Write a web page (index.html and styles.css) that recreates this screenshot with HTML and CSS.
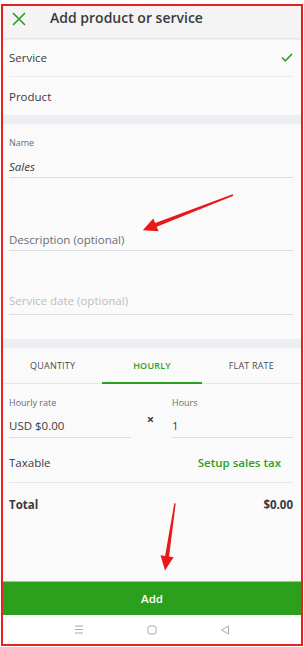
FILE: index.html
```html
<html>
  <head>
    <title>Add product or service</title>
    <meta name="viewport" content="width=device-width, initial-scale=1.0" />
    <link rel="stylesheet" href="styles.css">
  </head>
  <body>
    <div class="frame">
      <div class="topbar">
        <svg class="close" width="14" height="14" viewBox="0 0 14 14">
          <path d="M1 1 L13 13 M13 1 L1 13" stroke="#2ca01c" stroke-width="1.6" fill="none" />
        </svg>
        <h1>Add product or service</h1>
      </div>
      <div class="typerow">
        <span>Service</span>
        <svg width="12" height="9" viewBox="0 0 12 9">
          <path d="M1 4.5 L4.3 7.8 L11 1" stroke="#2ca01c" stroke-width="1.6" fill="none" />
        </svg>
      </div>
      <div class="typerow last">
        <span>Product</span>
      </div>
      <div class="band"></div>
      <div class="fields">
        <div class="field name">
          <div class="label">Name</div>
          <div class="value italic">Sales</div>
        </div>
        <div class="field desc">
          <div class="value hint">Description (optional)</div>
        </div>
        <div class="field date">
          <div class="value faint">Service date (optional)</div>
        </div>
      </div>
      <div class="band"></div>
      <div class="tabs">
        <div class="tab">QUANTITY</div>
        <div class="tab active">HOURLY</div>
        <div class="tab">FLAT RATE</div>
      </div>
      <div class="rate">
        <div class="field">
          <div class="label">Hourly rate</div>
          <div class="value">USD $0.00</div>
        </div>
        <div class="times">&times;</div>
        <div class="field">
          <div class="label">Hours</div>
          <div class="value">1</div>
        </div>
      </div>
      <div class="row taxable">
        <span>Taxable</span>
        <span class="link">Setup sales tax</span>
      </div>
      <div class="row total">
        <span>Total</span>
        <span>$0.00</span>
      </div>
      <div class="grow"></div>
      <button class="add">Add</button>
      <div class="navbar">
        <svg width="10" height="9" viewBox="0 0 10 9">
          <path d="M1 1 H9 M1 4.5 H9 M1 8 H9" stroke="#a9a9a9" stroke-width="1" fill="none" />
        </svg>
        <svg width="10" height="10" viewBox="0 0 10 10">
          <rect x="1" y="1" width="8" height="8" rx="2" stroke="#a9a9a9" stroke-width="1" fill="none" />
        </svg>
        <svg width="10" height="10" viewBox="0 0 10 10">
          <path d="M8.5 1 L1.5 5 L8.5 9 Z" stroke="#a9a9a9" stroke-width="1" fill="none" stroke-linejoin="round" />
        </svg>
      </div>
    </div>
    <svg class="marks" width="304" height="647" viewBox="0 0 304 647">
      <polygon fill="#e8191b" points="232.6,194.3 155.3,223.0 153.2,218.6 142.8,230.2 158.6,231.2 156.7,226.8 233.4,195.7" />
      <polygon fill="#e8191b" points="174.3,503.2 165.1,555.9 160.5,555.2 165,570.5 173.6,557.2 169.1,556.5 175.7,503.4" />
    </svg>
  </body>
</html>
```

FILE: styles.css
```css
body {
  margin: 0;
  background: #fff;
  font-family: "Open Sans", "Noto Sans", sans-serif;
  color: #393a3d;
  position: relative;
}
.frame {
  margin: 4px 1px 1px 1px;
  border: 2px solid #e8201f;
  background: #fafafa;
  display: flex;
  flex-direction: column;
  box-sizing: border-box;
  height: 642px;
}
.topbar {
  height: 32px;
  box-sizing: border-box;
  padding-top: 2px;
  background: #f4f4f4;
  display: flex;
  align-items: flex-start;
  box-shadow: 0 1px 2px rgba(0, 0, 0, 0.12);
  position: relative;
}
.close {
  margin: 4px 24px 0 9px;
}
h1 {
  margin: 0;
  font-size: 14px;
  line-height: 20px;
  font-weight: 600;
  color: #393a3d;
}
.typerow {
  height: 38px;
  margin: 0 8px 0 6px;
  display: flex;
  align-items: center;
  justify-content: space-between;
  font-size: 11.5px;
  border-bottom: 1px solid #ececec;
}
.typerow.last {
  border-bottom: none;
}
.band {
  height: 9px;
  background: #eceef1;
}
.fields {
  padding: 0 8px 24px 6px;
}
.field {
  border-bottom: 1px solid #dcdcdc;
}
.label {
  font-size: 9px;
  line-height: 12px;
  color: #6b6c72;
}
.value {
  font-size: 11.5px;
  line-height: 20px;
}
.italic {
  font-style: italic;
}
.hint {
  color: #6b6c72;
}
.faint {
  color: #babec5;
}
.name {
  padding-top: 13px;
}
.name .label {
  margin-bottom: 8px;
}
.desc {
  padding-top: 52px;
}
.date {
  padding-top: 40px;
  padding-bottom: 3px;
}
.tabs {
  display: flex;
  height: 35px;
  border-bottom: 1px solid #e6e6e6;
}
.tab {
  flex: 1;
  display: flex;
  align-items: center;
  justify-content: center;
  font-size: 9px;
  color: #4a4b50;
  letter-spacing: 0.2px;
}
.tab.active {
  color: #2ca01c;
  font-weight: 600;
  border-bottom: 2px solid #2ca01c;
  margin-bottom: -1px;
}
.rate {
  display: grid;
  grid-template-columns: 122px 1fr 121px;
  padding: 13px 8px 0 6px;
}
.rate .label {
  margin-bottom: 7px;
}
.rate .field {
  padding-bottom: 1px;
}
.times {
  text-align: center;
  font-size: 13px;
  font-weight: 700;
  padding-top: 13px;
  padding-right: 2px;
}
.row {
  display: flex;
  justify-content: space-between;
  margin: 0 8px 0 6px;
  font-size: 11.5px;
  line-height: 20px;
}
.taxable {
  padding: 15px 0 9px;
  border-bottom: 1px solid #e6e6e6;
}
.link {
  color: #2ca01c;
  font-weight: 600;
  margin-right: 12px;
}
.total {
  padding-top: 12px;
  font-weight: 700;
}
.grow {
  flex: 1;
}
.add {
  height: 34px;
  border: none;
  background: #2ca01c;
  color: #fff;
  font-family: inherit;
  font-size: 11.5px;
  font-weight: 600;
  border-top: 1px solid #8fd283;
}
.navbar {
  height: 29px;
  background: #fff;
  display: flex;
  align-items: center;
  justify-content: center;
  gap: 63px;
}
.marks {
  position: absolute;
  top: 0;
  left: 0;
  pointer-events: none;
}
```
